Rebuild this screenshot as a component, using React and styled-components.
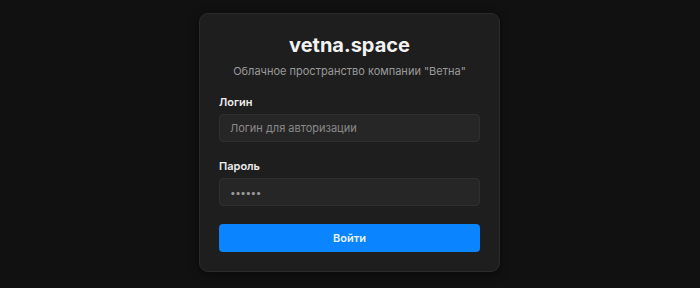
import React from "react";
import styled, { createGlobalStyle } from "styled-components";

const GlobalStyle = createGlobalStyle`
  html, body {
    margin: 0;
    padding: 0;
    background: #111111;
    font-family: Inter, "Noto Sans", sans-serif;
  }
  * { box-sizing: border-box; }
`;

const Page = styled.div`
  width: 700px;
  height: 288px;
  display: flex;
  justify-content: center;
  padding-top: 13px;
`;

const Card = styled.form`
  width: 301px;
  height: 259px;
  margin-left: -1px;
  background: #1e1e1e;
  border: 1px solid #2b2b2b;
  border-radius: 9px;
  padding: 19px 19px;
  display: flex;
  flex-direction: column;
  box-shadow: 0 2px 8px rgba(0, 0, 0, 0.5);
`;

const Title = styled.h1`
  margin: 0;
  font-size: 20px;
  line-height: 24px;
  font-weight: 700;
  color: #f2f2f2;
  text-align: center;
`;

const Subtitle = styled.p`
  margin: 6px 0 0;
  font-size: 11px;
  line-height: 16px;
  color: #9a9a9a;
  text-align: center;
`;

const Field = styled.div`
  display: flex;
  flex-direction: column;
  gap: 4px;
  margin-top: ${(p) => p.top}px;
`;

const Label = styled.label`
  font-size: 11px;
  line-height: 16px;
  font-weight: 600;
  color: #ececec;
`;

const Input = styled.input`
  height: 28px;
  width: 100%;
  background: #262626;
  border: 1px solid #2f2f2f;
  border-radius: 4px;
  padding: 0 10px;
  font-family: inherit;
  font-size: 11px;
  color: #8e8e8e;
  outline: none;
  &::placeholder { color: #8a8a8a; }
  &[type="password"] { letter-spacing: -0.5px; font-size: 10px; color: #9a9a9a; }
`;

const Button = styled.button`
  margin-top: 18px;
  height: 29px;
  width: 100%;
  background: #0a84ff;
  border: none;
  border-radius: 4px;
  color: #e8f2ff;
  font-family: inherit;
  font-size: 11px;
  font-weight: 600;
  cursor: pointer;
`;

export default function App() {
  return (
    <>
      <GlobalStyle />
      <Page>
        <Card onSubmit={(e) => e.preventDefault()}>
          <Title>vetna.space</Title>
          <Subtitle>Облачное пространство компании "Ветна"</Subtitle>
          <Field top={15}>
            <Label>Логин</Label>
            <Input placeholder="Логин для авторизации" />
          </Field>
          <Field top={16}>
            <Label>Пароль</Label>
            <Input type="password" defaultValue="123456" />
          </Field>
          <Button type="submit">Войти</Button>
        </Card>
      </Page>
    </>
  );
}
